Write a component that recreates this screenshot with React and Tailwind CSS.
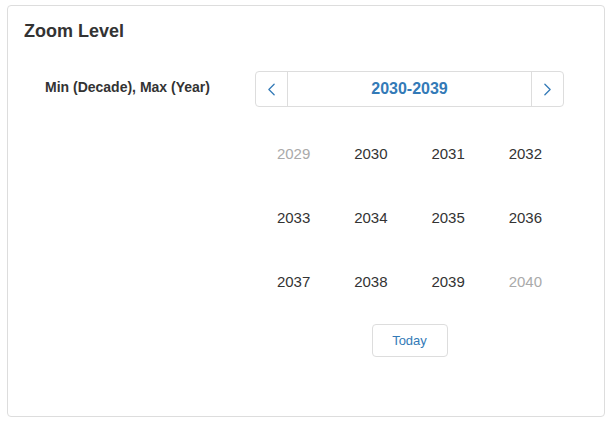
import { ChevronLeft, ChevronRight } from 'lucide-react';

const YEARS = [
  { y: 2029, muted: true },
  { y: 2030 }, { y: 2031 }, { y: 2032 }, { y: 2033 }, { y: 2034 },
  { y: 2035 }, { y: 2036 }, { y: 2037 }, { y: 2038 }, { y: 2039 },
  { y: 2040, muted: true },
];

export default function App() {
  return (
    <div className="w-[608px] h-[424px] bg-white pt-[5px] pl-[7px] font-['Liberation_Sans',Arial,sans-serif]">
      <div className="w-[598px] h-[412px] border border-[#dddddd] rounded-[4px] px-[16px] pt-[13px]">
        <h2 className="text-[18px] leading-[24px] font-bold text-[#333333]">Zoom Level</h2>

        <div className="flex mt-[28px]">
          <div className="w-[231px] pl-[21px] h-[32px] flex items-center text-[14px] font-bold text-[#333333]">
            Min (Decade), Max (Year)
          </div>

          <div className="w-[309px]">
            {/* header */}
            <div className="flex h-[36px] border border-[#dddddd] rounded-[4px] text-[#337ab7]">
              <button className="w-[32px] flex items-center justify-center border-r border-[#dddddd]">
                <ChevronLeft size={21} strokeWidth={1.5} />
              </button>
              <div className="flex-1 flex items-center justify-center text-[16px] font-bold">2030-2039</div>
              <button className="w-[32px] flex items-center justify-center border-l border-[#dddddd]">
                <ChevronRight size={21} strokeWidth={1.5} />
              </button>
            </div>

            {/* years */}
            <div className="grid grid-cols-4 mt-[15px]">
              {YEARS.map((it) => (
                <div
                  key={it.y}
                  className={`h-[64px] flex items-center justify-center text-[15px] ${it.muted ? 'text-[#aaaaaa]' : 'text-[#333333]'}`}
                >
                  {it.y}
                </div>
              ))}
            </div>

            <div className="flex justify-center mt-[10px]">
              <button className="w-[76px] h-[33px] border border-[#dddddd] rounded-[4px] text-[13px] text-[#337ab7]">
                Today
              </button>
            </div>
          </div>
        </div>
      </div>
    </div>
  );
}
